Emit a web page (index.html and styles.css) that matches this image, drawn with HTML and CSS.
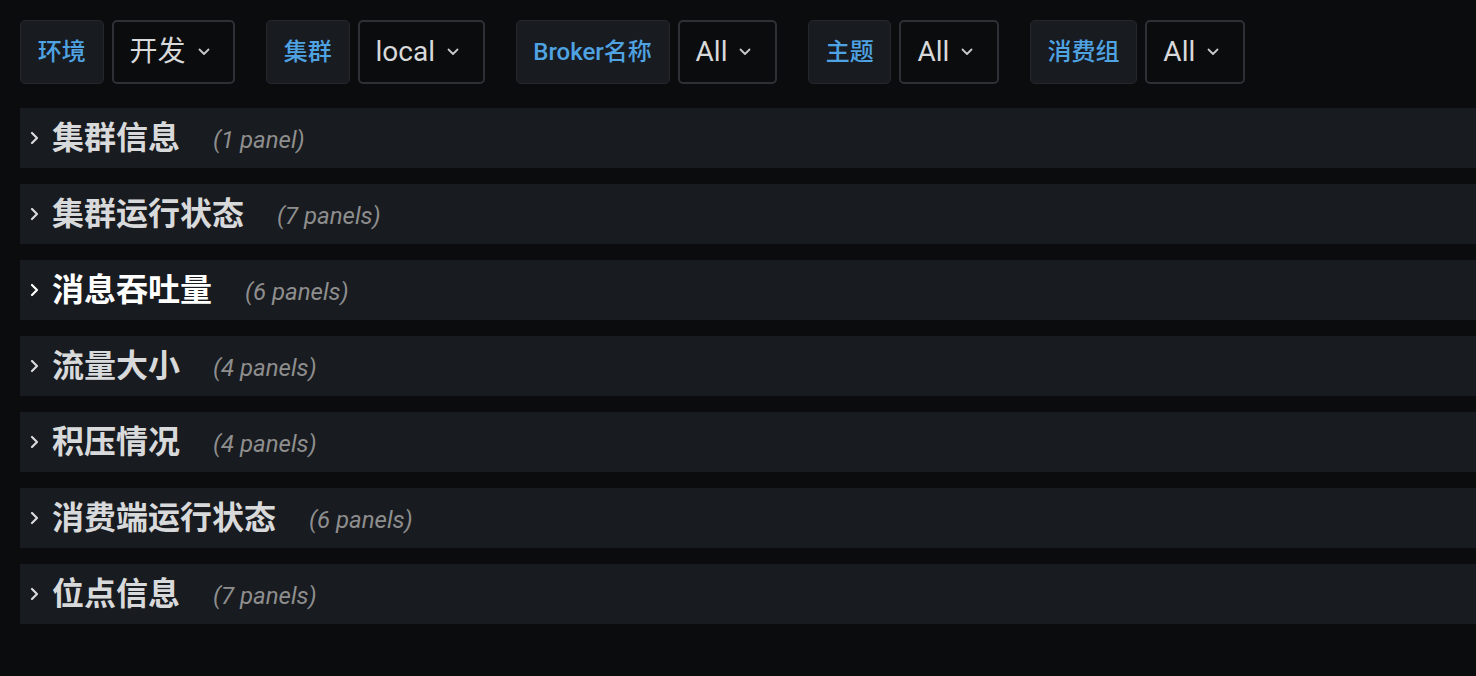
FILE: index.html
```html
<!DOCTYPE html>
<html lang="zh">
<head>
<meta charset="utf-8">
<title>Dashboard</title>
<link rel="stylesheet" href="styles.css">
</head>
<body>
<div class="page">
  <div class="filters">
    <div class="group"><div class="label">环境</div><div class="select"><span>开发</span><svg class="caret" viewBox="0 0 12 8"><polyline points="1.5,1.5 6,6 10.5,1.5"/></svg></div></div>
    <div class="group"><div class="label">集群</div><div class="select"><span>local</span><svg class="caret" viewBox="0 0 12 8"><polyline points="1.5,1.5 6,6 10.5,1.5"/></svg></div></div>
    <div class="group"><div class="label">Broker名称</div><div class="select"><span>All</span><svg class="caret" viewBox="0 0 12 8"><polyline points="1.5,1.5 6,6 10.5,1.5"/></svg></div></div>
    <div class="group"><div class="label">主题</div><div class="select"><span>All</span><svg class="caret" viewBox="0 0 12 8"><polyline points="1.5,1.5 6,6 10.5,1.5"/></svg></div></div>
    <div class="group"><div class="label">消费组</div><div class="select"><span>All</span><svg class="caret" viewBox="0 0 12 8"><polyline points="1.5,1.5 6,6 10.5,1.5"/></svg></div></div>
  </div>
  <div class="rows">
    <div class="row"><svg class="arrow" viewBox="0 0 10 14"><polyline points="2,2 7,7 2,12"/></svg><span class="title">集群信息</span><span class="count">(1 panel)</span></div>
    <div class="row"><svg class="arrow" viewBox="0 0 10 14"><polyline points="2,2 7,7 2,12"/></svg><span class="title">集群运行状态</span><span class="count">(7 panels)</span></div>
    <div class="row hover"><svg class="arrow" viewBox="0 0 10 14"><polyline points="2,2 7,7 2,12"/></svg><span class="title">消息吞吐量</span><span class="count">(6 panels)</span></div>
    <div class="row"><svg class="arrow" viewBox="0 0 10 14"><polyline points="2,2 7,7 2,12"/></svg><span class="title">流量大小</span><span class="count">(4 panels)</span></div>
    <div class="row"><svg class="arrow" viewBox="0 0 10 14"><polyline points="2,2 7,7 2,12"/></svg><span class="title">积压情况</span><span class="count">(4 panels)</span></div>
    <div class="row"><svg class="arrow" viewBox="0 0 10 14"><polyline points="2,2 7,7 2,12"/></svg><span class="title">消费端运行状态</span><span class="count">(6 panels)</span></div>
    <div class="row"><svg class="arrow" viewBox="0 0 10 14"><polyline points="2,2 7,7 2,12"/></svg><span class="title">位点信息</span><span class="count">(7 panels)</span></div>
  </div>
</div>
</body>
</html>
```
FILE: styles.css
```css
html, body {
  margin: 0;
  background: #0b0c0e;
  height: 100%;
  overflow: hidden;
}
body {
  font-family: Roboto, "Noto Sans CJK SC", sans-serif;
}
.page {
  padding: 20px 0 0 20px;
}
.filters {
  display: flex;
  gap: 31px;
}
.group {
  display: flex;
  gap: 8px;
}
.label {
  height: 64px;
  box-sizing: border-box;
  padding: 0 16.75px;
  display: flex;
  align-items: center;
  background: #181b1f;
  border: 1px solid #25272b;
  border-radius: 5px;
  color: #4fa3e3;
  font-size: 24px;
  font-weight: 500;
  line-height: 1;
}
.select {
  height: 64px;
  box-sizing: border-box;
  padding: 0 23.5px 0 16px;
  display: flex;
  align-items: center;
  gap: 12px;
  background: #0b0c0e;
  border: 2px solid #2d3034;
  border-radius: 5px;
  color: #d8d9da;
  font-size: 28px;
  line-height: 1;
}
.caret {
  width: 12px;
  height: 8px;
  fill: none;
  stroke: #c7c8ca;
  stroke-width: 1.8;
  stroke-linecap: round;
  stroke-linejoin: round;
}
.rows {
  margin-top: 24px;
  display: flex;
  flex-direction: column;
  gap: 16px;
}
.row {
  height: 60px;
  display: flex;
  align-items: center;
  background: #181b1f;
  padding-left: 10px;
}
.arrow {
  width: 10px;
  height: 14px;
  fill: none;
  stroke: #d8d9da;
  stroke-width: 2.2;
  stroke-linecap: round;
  stroke-linejoin: round;
  margin-right: 12px;
}
.title {
  color: #d8d9da;
  font-size: 32px;
  font-weight: 700;
  line-height: 1;
}
.row.hover .title,
.row.hover .arrow {
  color: #ffffff;
  stroke: #ffffff;
}
.count {
  margin-left: 33px;
  margin-top: 4px;
  color: #8e8e8e;
  font-size: 24px;
  font-style: italic;
  line-height: 1;
}
```
